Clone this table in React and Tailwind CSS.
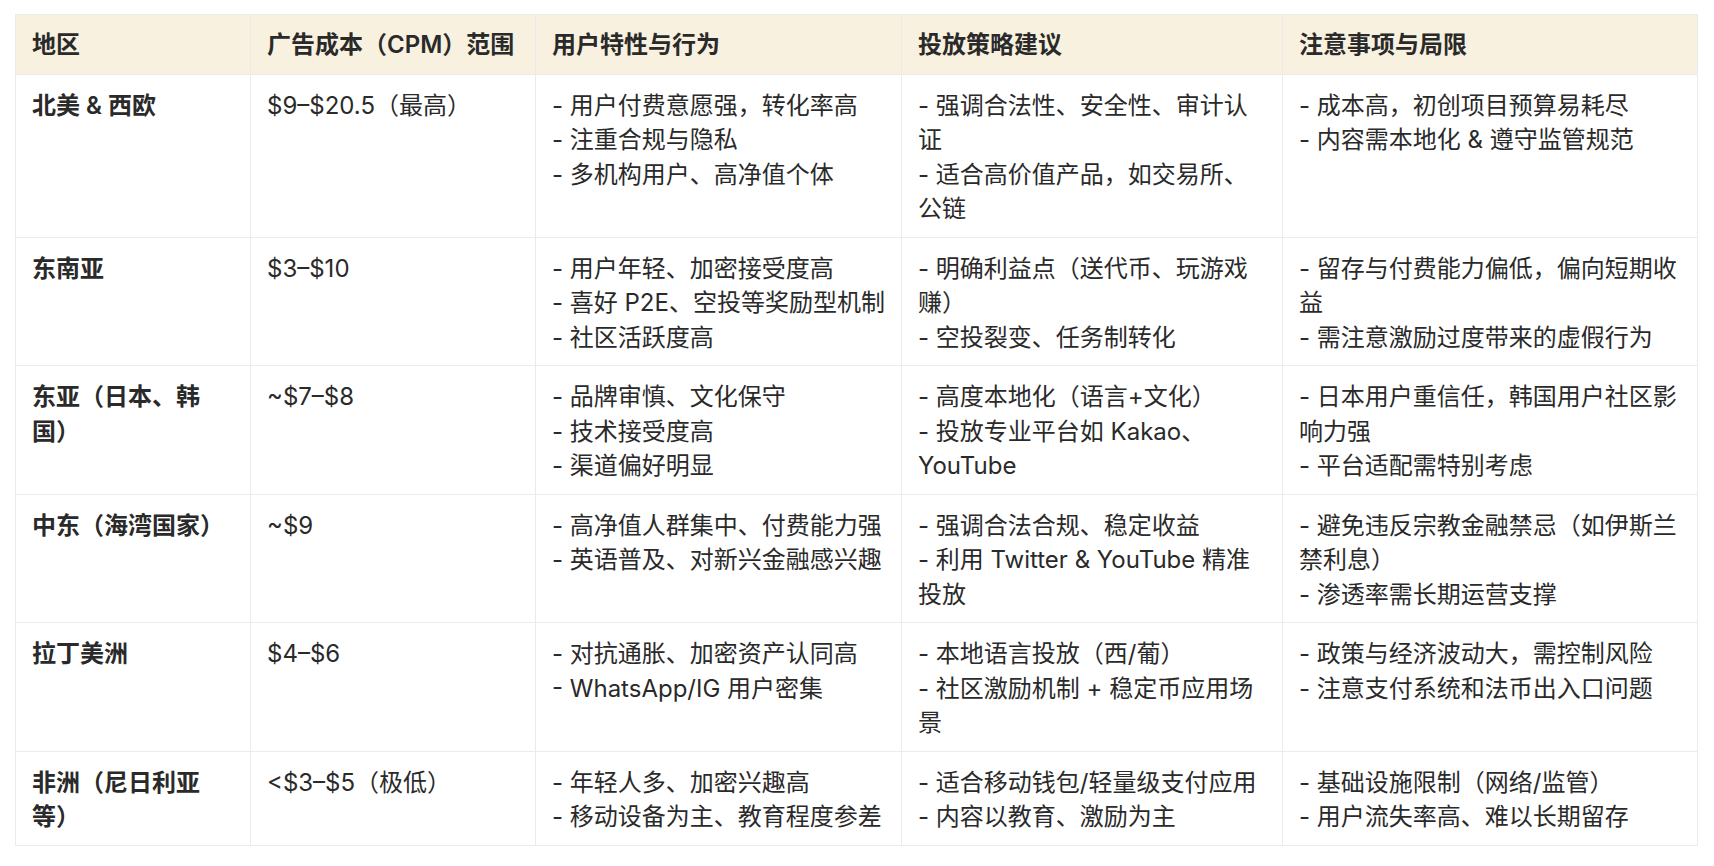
import React from "react";

const rows = [
  {
    region: ["北美 & 西欧"],
    cost: ["$9–$20.5（最高）"],
    user: ["- 用户付费意愿强，转化率高", "- 注重合规与隐私", "- 多机构用户、高净值个体"],
    strategy: ["- 强调合法性、安全性、审计认", "证", "- 适合高价值产品，如交易所、", "公链"],
    notes: ["- 成本高，初创项目预算易耗尽", "- 内容需本地化 & 遵守监管规范"],
  },
  {
    region: ["东南亚"],
    cost: ["$3–$10"],
    user: ["- 用户年轻、加密接受度高", "- 喜好 P2E、空投等奖励型机制", "- 社区活跃度高"],
    strategy: ["- 明确利益点（送代币、玩游戏", "赚）", "- 空投裂变、任务制转化"],
    notes: ["- 留存与付费能力偏低，偏向短期收", "益", "- 需注意激励过度带来的虚假行为"],
  },
  {
    region: ["东亚（日本、韩", "国）"],
    cost: ["~$7–$8"],
    user: ["- 品牌审慎、文化保守", "- 技术接受度高", "- 渠道偏好明显"],
    strategy: ["- 高度本地化（语言+文化）", "- 投放专业平台如 Kakao、", "YouTube"],
    notes: ["- 日本用户重信任，韩国用户社区影", "响力强", "- 平台适配需特别考虑"],
  },
  {
    region: ["中东（海湾国家）"],
    cost: ["~$9"],
    user: ["- 高净值人群集中、付费能力强", "- 英语普及、对新兴金融感兴趣"],
    strategy: ["- 强调合法合规、稳定收益", "- 利用 Twitter & YouTube 精准", "投放"],
    notes: ["- 避免违反宗教金融禁忌（如伊斯兰", "禁利息）", "- 渗透率需长期运营支撑"],
  },
  {
    region: ["拉丁美洲"],
    cost: ["$4–$6"],
    user: ["- 对抗通胀、加密资产认同高", "- WhatsApp/IG 用户密集"],
    strategy: ["- 本地语言投放（西/葡）", "- 社区激励机制 + 稳定币应用场", "景"],
    notes: ["- 政策与经济波动大，需控制风险", "- 注意支付系统和法币出入口问题"],
  },
  {
    region: ["非洲（尼日利亚", "等）"],
    cost: ["<$3–$5（极低）"],
    user: ["- 年轻人多、加密兴趣高", "- 移动设备为主、教育程度参差"],
    strategy: ["- 适合移动钱包/轻量级支付应用", "- 内容以教育、激励为主"],
    notes: ["- 基础设施限制（网络/监管）", "- 用户流失率高、难以长期留存"],
  },
];

const headers = ["地区", "广告成本（CPM）范围", "用户特性与行为", "投放策略建议", "注意事项与局限"];

function Lines({ lines }) {
  return (
    <>
      {lines.map((l, i) => (
        <div key={i} className="whitespace-nowrap">
          {l}
        </div>
      ))}
    </>
  );
}

export default function App() {
  return (
    <div className="min-h-screen bg-white pt-[14px] pl-[15px] font-[Inter,'Noto_Sans_CJK_SC',sans-serif] text-[24px] leading-[34.5px] text-[#2a2a2a]">
      <table className="table-fixed border-collapse w-[1682px] border border-[#ebebeb]">
        <colgroup>
          <col className="w-[235px]" />
          <col className="w-[285px]" />
          <col className="w-[366px]" />
          <col className="w-[381px]" />
          <col className="w-[415px]" />
        </colgroup>
        <thead>
          <tr className="bg-[#f8f1df]">
            {headers.map((h) => (
              <th
                key={h}
                className="border border-[#ebebeb] px-4 pt-[13px] pb-[11px] text-left align-top font-semibold whitespace-nowrap"
              >
                {h}
              </th>
            ))}
          </tr>
        </thead>
        <tbody>
          {rows.map((r, i) => (
            <tr key={i}>
              <td className="border border-[#ebebeb] px-4 pt-[14px] pb-[10px] align-top font-semibold">
                <Lines lines={r.region} />
              </td>
              <td className="border border-[#ebebeb] px-4 pt-[14px] pb-[10px] align-top">
                <Lines lines={r.cost} />
              </td>
              <td className="border border-[#ebebeb] px-4 pt-[14px] pb-[10px] align-top">
                <Lines lines={r.user} />
              </td>
              <td className="border border-[#ebebeb] px-4 pt-[14px] pb-[10px] align-top">
                <Lines lines={r.strategy} />
              </td>
              <td className="border border-[#ebebeb] px-4 pt-[14px] pb-[10px] align-top">
                <Lines lines={r.notes} />
              </td>
            </tr>
          ))}
        </tbody>
      </table>
    </div>
  );
}
